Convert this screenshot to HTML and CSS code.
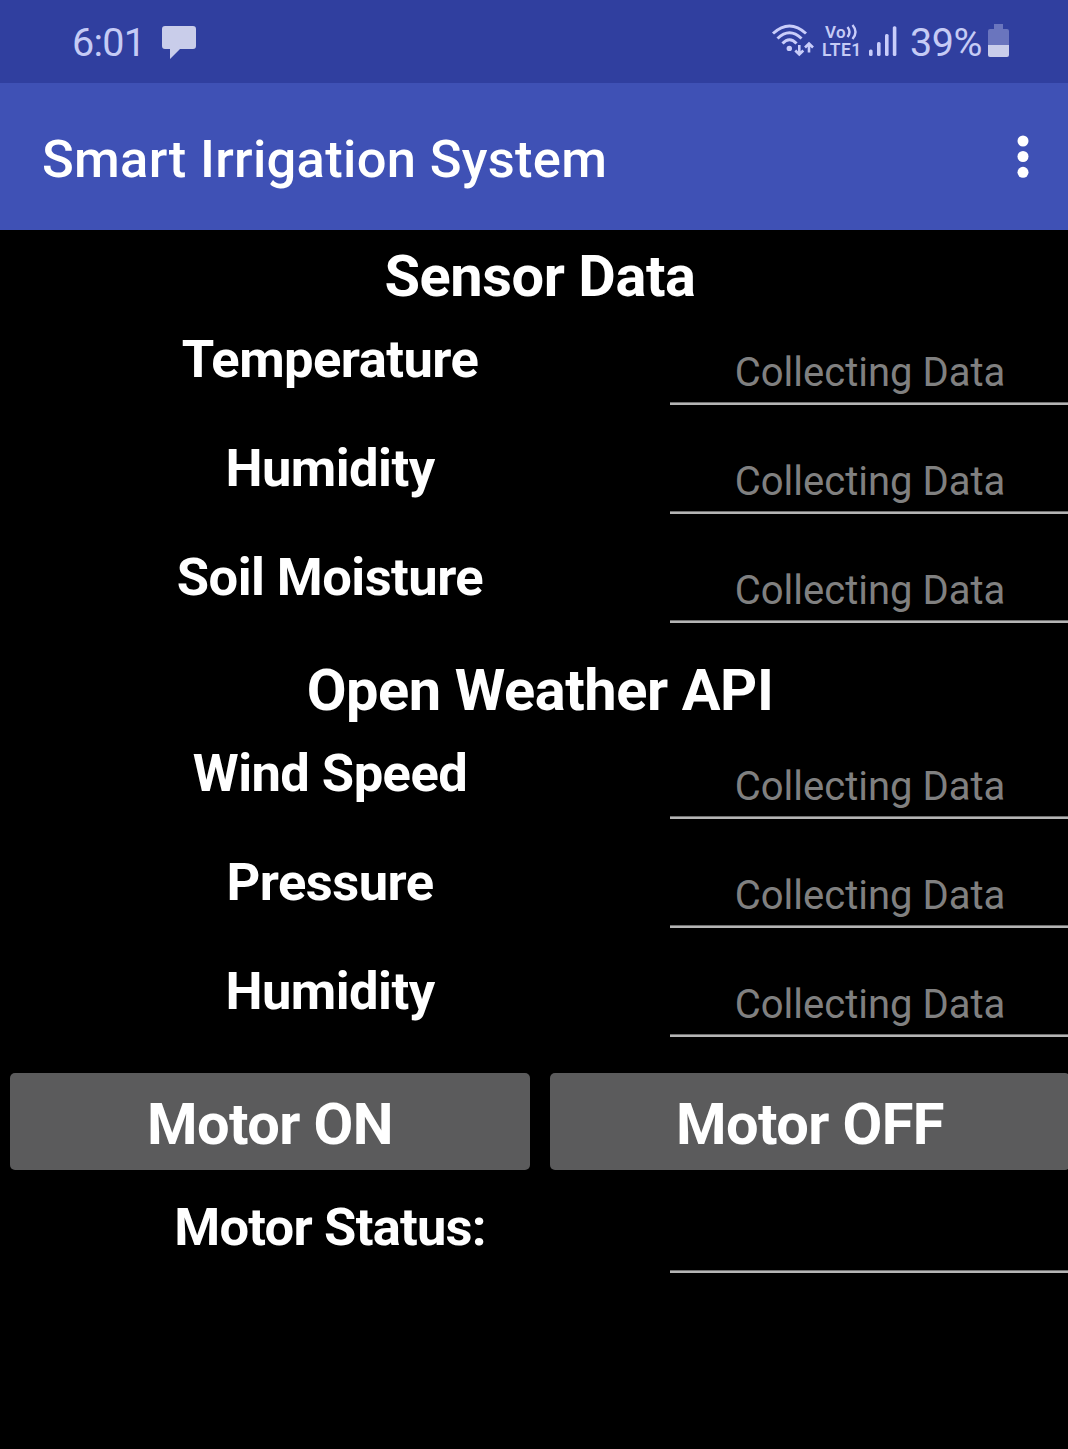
FILE: index.html
```html
<!DOCTYPE html>
<html lang="en">
<head>
<meta charset="utf-8">
<title>Smart Irrigation System</title>
<link rel="stylesheet" href="styles.css">
</head>
<body>
<div class="status-bar">
  <span class="clock">6:01</span>
  <svg class="chat" width="34" height="34" viewBox="0 0 34 34"><path d="M3 0h28q3 0 3 3v17q0 3-3 3H18L8 33V23H3q-3 0-3-3V3q0-3 3-3z"/></svg>
  <svg class="wifi" width="44" height="34" viewBox="0 0 44 34">
    <g class="stroke"><path d="M2 9.500Q18.500-5.500 35 9.500"/><path d="M6.500 14.500Q18.500 3 30.500 14.500"/><path d="M11.500 19.500Q18.500 12 25.500 19.500"/></g>
    <circle cx="18.300" cy="24.400" r="2.700"/>
    <g class="arrows"><path d="M28.300 21v9.500M24.300 26.500l4 4 4-4"/><path d="M38 28.500V19.500M34 23.500l4-4 4 4"/></g>
  </svg>
  <div class="volte">
    <div class="vo">Vo<svg width="13" height="18" viewBox="0 0 13 18"><path d="M1.500 4q4 5 0 10M6.500 2q6 7 0 14"/></svg></div>
    <div class="lte">LTE1</div>
  </div>
  <svg class="signal" width="28" height="32" viewBox="0 0 28 32"><rect x="0" y="24.500" width="3.600" height="6.500" rx="1.500"/><rect x="8" y="17" width="3.600" height="14" rx="1.500"/><rect x="16" y="9" width="3.600" height="22" rx="1.500"/><rect x="23.800" y="1.300" width="3.600" height="29.700" rx="1.500"/></svg>
  <span class="percent">39%</span>
  <svg class="battery" width="21" height="33" viewBox="0 0 21 33"><path class="empty" d="M6 0h9v5h4q2 0 2 2v14H0V7q0-2 2-2h4z"/><path d="M0 21h21v10q0 2-2 2H2q-2 0-2-2z"/></svg>
</div>
<header class="app-bar">
  <h1>Smart Irrigation System</h1>
  <svg class="menu" width="12" height="44" viewBox="0 0 12 44"><circle cx="6" cy="6" r="5.500"/><circle cx="6" cy="21.500" r="5.500"/><circle cx="6" cy="37.300" r="5.500"/></svg>
</header>
<main>
  <h2>Sensor Data</h2>
  <div class="row"><span class="label">Temperature</span><span class="field">Collecting Data</span></div>
  <div class="row"><span class="label">Humidity</span><span class="field">Collecting Data</span></div>
  <div class="row"><span class="label">Soil Moisture</span><span class="field">Collecting Data</span></div>
  <h2>Open Weather API</h2>
  <div class="row"><span class="label">Wind Speed</span><span class="field">Collecting Data</span></div>
  <div class="row"><span class="label">Pressure</span><span class="field">Collecting Data</span></div>
  <div class="row"><span class="label">Humidity</span><span class="field">Collecting Data</span></div>
  <div class="buttons"><button class="btn">Motor ON</button><button class="btn">Motor OFF</button></div>
  <div class="row"><span class="label status">Motor Status:</span><span class="field"></span></div>
</main>
</body>
</html>
```

FILE: styles.css
```css
* { box-sizing: border-box; }
body {
  margin: 0;
  min-height: 1449px;
  background: #000;
  color: #fff;
  font-family: Roboto, "Liberation Sans", sans-serif;
  overflow: hidden;
}
.status-bar {
  display: flex;
  align-items: flex-start;
  height: 83px;
  padding-left: 72px;
  background: #303f9f;
  color: #c5cbf5;
}
.status-bar svg { fill: #c9cdea; flex: none; }
.clock, .percent { font-size: 39.500px; line-height: 46px; margin-top: 20px; white-space: nowrap; }
.clock { width: 90px; letter-spacing: -0.700px; }
.chat { margin-top: 26px; }
.status-bar .wifi { margin: 24px 0 0 575px; fill: #c9cdfa; }
.wifi .stroke, .wifi .arrows { fill: none; stroke: #c9cdfa; stroke-width: 3; }
.wifi .arrows { stroke-width: 2.600; }
.volte { width: 40px; margin: 23px 0 0 7px; font-weight: 600; }
.vo { display: flex; height: 18px; padding-left: 3px; font-size: 17px; line-height: 18px; letter-spacing: 0.300px; }
.status-bar .vo svg { fill: none; stroke: #c9cdfa; stroke-width: 2.400; }
.lte { font-size: 17.500px; line-height: 18px; letter-spacing: 0.400px; }
.status-bar .signal { margin: 25px 0 0 7px; fill: #c9cdfa; }
.percent { width: 78px; margin-left: 13px; letter-spacing: -0.400px; }
.battery { margin-top: 24px; }
.status-bar .battery .empty { fill: #6a75be; }
.app-bar {
  display: flex;
  align-items: flex-start;
  justify-content: space-between;
  height: 147px;
  padding: 0 39.500px 0 42px;
  background: #3f51b5;
}
h1 { margin: 45px 0 0; font-size: 52.500px; font-weight: 500; line-height: 62px; letter-spacing: 0.300px; }
.menu { margin-top: 52px; fill: #fff; }
main { width: 1080px; }
h2 {
  height: 87px;
  margin: 0;
  padding-top: 10px;
  font-size: 57.750px;
  font-weight: 700;
  line-height: 72px;
  letter-spacing: -0.420px;
  text-align: center;
}
.row { display: grid; grid-template-columns: 660px 400px; column-gap: 10px; height: 109px; }
.label { font-size: 52.500px; font-weight: 700; line-height: 84px; letter-spacing: -0.550px; text-align: center; }
.label.status { letter-spacing: -0.780px; }
.field {
  height: 88px;
  padding-top: 25px;
  border-bottom: 2px solid #b5b5b5;
  box-shadow: inset 0 -1px #707070;
  color: #808080;
  font-size: 40px;
  line-height: 62px;
  text-align: center;
}
.buttons { display: grid; grid-template-columns: 520px 520px; gap: 20px; padding: 15px 10px; }
.btn {
  height: 97px;
  padding: 5px 0 0;
  border: 0;
  border-radius: 5px;
  background: #5b5b5c;
  color: #fff;
  font: 700 57.750px/92px Roboto, "Liberation Sans", sans-serif;
  letter-spacing: -0.600px;
}
```
